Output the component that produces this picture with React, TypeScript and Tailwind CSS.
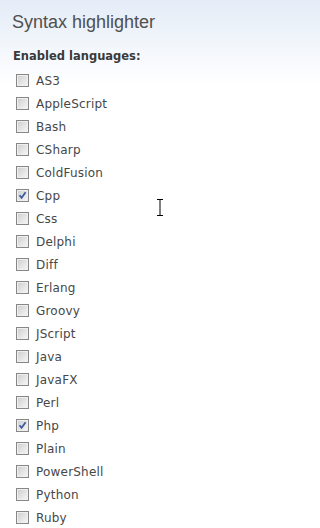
const languages: { name: string; checked?: boolean }[] = [
  { name: 'AS3' },
  { name: 'AppleScript' },
  { name: 'Bash' },
  { name: 'CSharp' },
  { name: 'ColdFusion' },
  { name: 'Cpp', checked: true },
  { name: 'Css' },
  { name: 'Delphi' },
  { name: 'Diff' },
  { name: 'Erlang' },
  { name: 'Groovy' },
  { name: 'JScript' },
  { name: 'Java' },
  { name: 'JavaFX' },
  { name: 'Perl' },
  { name: 'Php', checked: true },
  { name: 'Plain' },
  { name: 'PowerShell' },
  { name: 'Python' },
  { name: 'Ruby' },
];

function Checkbox({ checked }: { checked?: boolean }) {
  return (
    <span className="relative flex h-[13px] w-[13px] shrink-0 border border-[#878787] bg-gradient-to-br from-[#cdcdcd] to-[#f8f8f8] shadow-[inset_0_0_0_1px_#efefef]">
      {checked && (
        <svg viewBox="0 0 11 11" className="absolute left-0 top-0 h-[11px] w-[11px]">
          <path d="M2.5 5.2 L4.6 7.8 L8.6 2.2" fill="none" stroke="#3f5a9e" strokeWidth="1.8" />
        </svg>
      )}
    </span>
  );
}

export default function App() {
  return (
    <div className="relative h-[528px] w-full min-w-[268px] overflow-hidden bg-gradient-to-b from-[#e4ecf7] via-white via-[16%] to-white">
      <h1 className="pl-[12px] pt-[11px] text-[18px] leading-[22px] text-[#4f4f4f] [font-family:'Liberation_Sans',Arial,sans-serif]">
        Syntax highlighter
      </h1>
      <div className="mt-[16px] pl-[13px] text-[11.5px] font-bold leading-[14px] text-[#3a3a3a] [font-family:'DejaVu_Sans',Verdana,sans-serif]">
        Enabled languages:
      </div>
      <ul className="mt-[6px] flex flex-col [font-family:'DejaVu_Sans',Verdana,sans-serif]">
        {languages.map((lang) => (
          <li key={lang.name} className="flex h-[23px] items-center gap-[7px] pl-[16px]">
            <Checkbox checked={lang.checked} />
            <span className="text-[12px] leading-[14px] tracking-[0.2px] text-[#474747]">{lang.name}</span>
          </li>
        ))}
      </ul>
      {/* mouse cursor */}
      <svg className="absolute left-[156px] top-[199px] h-[17px] w-[8px]" viewBox="0 0 8 17">
        <path d="M1 0.5 H7 M1 16.5 H7 M4 0.5 V16.5" fill="none" stroke="#000" strokeWidth="1" />
      </svg>
    </div>
  );
}
